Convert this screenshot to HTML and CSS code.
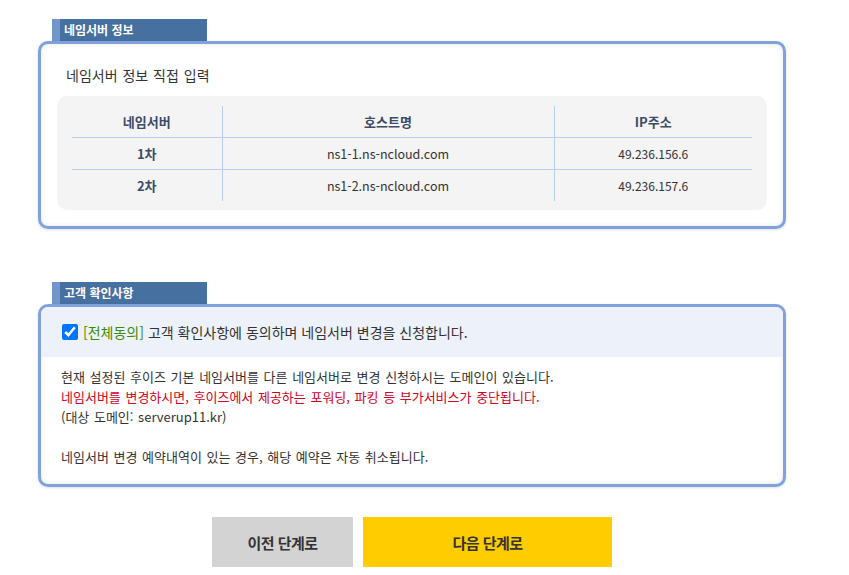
FILE: index.html
```html
<!DOCTYPE html>
<html lang="ko">
<head>
<meta charset="utf-8">
<link rel="stylesheet" href="styles.css">
</head>
<body>
<div class="wrap">
  <section class="section first">
    <div class="tab">네임서버 정보</div>
    <div class="box">
      <h3 class="box-title">네임서버 정보 직접 입력</h3>
      <div class="gray">
        <table class="ns">
          <thead>
            <tr><th class="c1">네임서버</th><th class="c2">호스트명</th><th class="c3">IP주소</th></tr>
          </thead>
          <tbody>
            <tr><td class="c1 rank">1차</td><td class="c2">ns1-1.ns-ncloud.com</td><td class="c3">49.236.156.6</td></tr>
            <tr><td class="c1 rank">2차</td><td class="c2">ns1-2.ns-ncloud.com</td><td class="c3">49.236.157.6</td></tr>
          </tbody>
        </table>
      </div>
    </div>
  </section>

  <section class="section second">
    <div class="tab">고객 확인사항</div>
    <div class="box agree-box">
      <label class="agree-head">
        <input type="checkbox" class="chk" checked>
        <span class="agree-text"><span class="green">[전체동의]</span> 고객 확인사항에 동의하며 네임서버 변경을 신청합니다.</span>
      </label>
      <div class="agree-body">
        <p>현재 설정된 후이즈 기본 네임서버를 다른 네임서버로 변경 신청하시는 도메인이 있습니다.</p>
        <p class="red">네임서버를 변경하시면, 후이즈에서 제공하는 포워딩, 파킹 등 부가서비스가 중단됩니다.</p>
        <p>(대상 도메인: serverup11.kr)</p>
        <p class="blank">&nbsp;</p>
        <p>네임서버 변경 예약내역이 있는 경우, 해당 예약은 자동 취소됩니다.</p>
      </div>
    </div>
  </section>

  <div class="buttons">
    <button class="btn prev">이전 단계로</button>
    <button class="btn next">다음 단계로</button>
  </div>
</div>
</body>
</html>
```
FILE: styles.css
```css
* { box-sizing: border-box; }
html, body { margin: 0; padding: 0; background: #fff; }
body {
  font-family: "Noto Sans CJK KR", "Noto Sans", sans-serif;
  color: #333;
  width: 849px;
  height: 575px;
  overflow: hidden;
}
.wrap {
  margin-left: 38px;
  width: 748px;
  padding-top: 19px;
}
.section.second { margin-top: 53px; }

.tab {
  margin-left: 14px;
  width: 155px;
  height: 22px;
  background: #46709f;
  border-left: 8px solid #7096cb;
  color: #fff;
  font-size: 12px;
  font-weight: bold;
  line-height: 22px;
  padding-left: 4px;
}

.box {
  border: 3px solid #7fa2dc;
  border-radius: 10px;
  background: #fff;
  box-shadow: inset 0 0 5px rgba(0, 0, 0, 0.10), 0 1px 3px rgba(0, 0, 0, 0.12);
  padding: 21px 16px 16px 16px;
}
.box-title {
  margin: 0 0 11px 9px;
  font-size: 14px;
  line-height: 20px;
  font-weight: normal;
  color: #333;
  word-spacing: 1px;
}
.gray {
  background: #f4f4f4;
  border-radius: 10px;
  padding: 10px 15px 9px 15px;
}
.ns {
  width: 100%;
  border-collapse: collapse;
  font-size: 12.5px;
  text-align: center;
}
.ns .c1 { width: 150px; }
.ns .c2 { width: 332px; }
.ns .c3 { width: 198px; }
.ns th, .ns td { padding: 0; }
.ns th {
  height: 31px;
  font-weight: bold;
  color: #3d4c68;
  font-size: 13px;
  border-bottom: 1px solid #b7ccef;
}
.ns td {
  height: 32px;
  color: #333;
}
.ns tbody tr:first-child td { border-bottom: 1px solid #b7ccef; }
.ns .c1, .ns .c2 { border-right: 1px solid #b7ccef; }
.ns td.rank { font-weight: bold; color: #3d4c68; font-size: 13px; }
.ns td.c3 { font-size: 12px; }

.agree-box { padding: 0; overflow: hidden; }
.agree-head {
  display: flex;
  align-items: center;
  height: 50px;
  background: #edf1f9;
  padding-left: 21px;
  gap: 5px;
  font-size: 14px;
}
.chk {
  width: 16px;
  height: 16px;
  margin: 0;
  accent-color: #0075ff;
}
.green { color: #3b8c00; }
.agree-body {
  padding: 10px 20px 17px 20px;
  font-size: 13px;
  line-height: 20px;
  word-spacing: 1px;
}
.agree-body p { margin: 0; }
.red { color: #d3001d; }

.buttons {
  display: flex;
  justify-content: center;
  gap: 10px;
  margin-top: 30px;
}
.btn {
  height: 50px;
  border: 0;
  font-family: "Noto Sans CJK KR", sans-serif;
  font-size: 15px;
  font-weight: bold;
  color: #333;
  letter-spacing: -0.5px;
}
.prev { width: 141px; background: #d3d3d3; }
.next { width: 249px; background: #ffcc00; }
```
